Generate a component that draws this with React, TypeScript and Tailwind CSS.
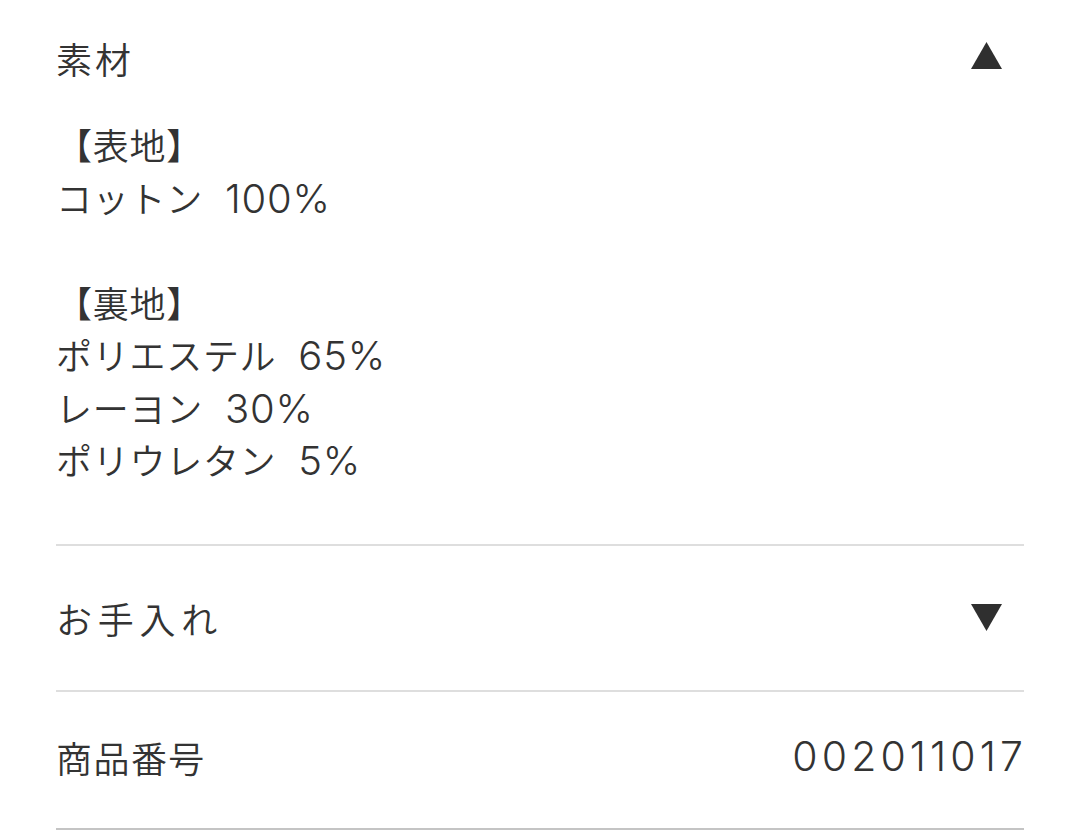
const jp = '"Noto Sans CJK JP", "Noto Sans", sans-serif';
const num = 'Inter, "Noto Sans CJK JP", sans-serif';

function Triangle({ up }: { up: boolean }) {
  return (
    <svg width="31" height="27" viewBox="0 0 31 27" className="shrink-0">
      {up ? (
        <polygon points="15.5,0 31,27 0,27" fill="#2f2f2f" />
      ) : (
        <polygon points="0,0 31,0 15.5,27" fill="#2f2f2f" />
      )}
    </svg>
  );
}

type Line = { label: string; amount?: string };

const outer: Line[] = [{ label: "【表地】" }, { label: "コットン", amount: "100%" }];
const lining: Line[] = [
  { label: "【裏地】" },
  { label: "ポリエステル", amount: "65%" },
  { label: "レーヨン", amount: "30%" },
  { label: "ポリウレタン", amount: "5%" },
];

function MaterialLine({ line }: { line: Line }) {
  return (
    <div className="h-[52.5px] whitespace-pre leading-[52.5px]">
      <span className="text-[36px] tracking-[0.02em]">{line.label}</span>
      {line.amount && (
        <span className="ml-[22px] text-[40px] font-light tracking-[0.02em]" style={{ fontFamily: num }}>
          {line.amount}
        </span>
      )}
    </div>
  );
}

export default function App() {
  return (
    <div className="min-h-[831px] w-[1080px] bg-white px-[56px] font-[350] text-[#333333]" style={{ fontFamily: jp }}>
      <section className="border-b-2 border-[#dedede] pb-[58px] pt-[33px]">
        <div className="flex h-[50px] items-center justify-between">
          <h2 className="text-[36px] tracking-[0.08em]">素材</h2>
          <div className="mb-[6px] mr-[22px]">
            <Triangle up />
          </div>
        </div>
        <div className="mt-[35px]">
          {outer.map((line) => (
            <MaterialLine key={line.label} line={line} />
          ))}
          <div className="h-[52.5px]" />
          {lining.map((line) => (
            <MaterialLine key={line.label} line={line} />
          ))}
        </div>
      </section>

      <section className="border-b-2 border-[#dedede] py-[47px]">
        <div className="flex h-[50px] items-center justify-between">
          <h2 className="text-[36px] tracking-[0.16em]">お手入れ</h2>
          <div className="mr-[22px]">
            <Triangle up={false} />
          </div>
        </div>
      </section>

      <section className="border-b-2 border-[#c4c4c4] pb-[46px] pt-[40px]">
        <div className="flex h-[50px] items-center justify-between">
          <h2 className="text-[36px] tracking-[0.04em]">商品番号</h2>
          <span className="mr-[-3px] text-[41px] font-light tracking-[0.1em]" style={{ fontFamily: num }}>
            002011017
          </span>
        </div>
      </section>
    </div>
  );
}
